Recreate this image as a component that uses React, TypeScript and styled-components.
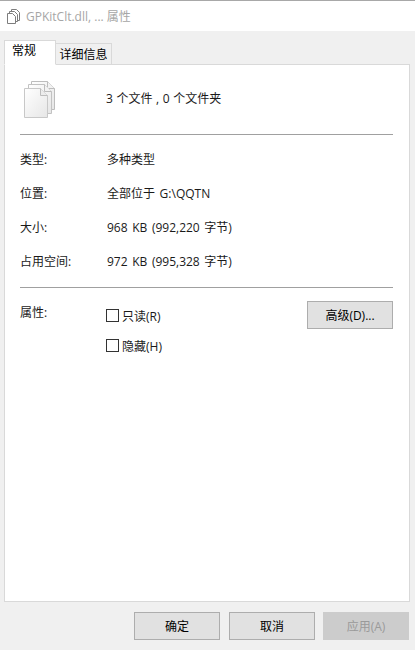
import styled, { createGlobalStyle } from "styled-components";

const GlobalStyle = createGlobalStyle`
  html, body {
    margin: 0;
    padding: 0;
    background: #f0f0f0;
  }
`;

const Dialog = styled.div`
  width: 415px;
  height: 650px;
  display: flex;
  flex-direction: column;
  background: #f0f0f0;
  font-family: "Open Sans", "Noto Sans CJK SC", sans-serif;
  font-size: 12px;
  color: #1a1a1a;
  border-top: 1px solid #a8a8a8;
  box-sizing: border-box;
`;

const TitleBar = styled.div`
  height: 30px;
  flex-shrink: 0;
  display: flex;
  align-items: center;
  gap: 6px;
  padding-left: 7px;
  background: #fff;
  color: #a6a6a6;
`;

const Tabs = styled.div`
  display: flex;
  align-items: flex-end;
  height: 33px;
  padding-left: 4px;
  flex-shrink: 0;
`;

const Tab = styled.div<{ $active?: boolean }>`
  box-sizing: border-box;
  display: flex;
  align-items: ${(p) => (p.$active ? "flex-start" : "center")};
  justify-content: ${(p) => (p.$active ? "flex-start" : "center")};
  padding-left: ${(p) => (p.$active ? "7px" : "0")};
  height: ${(p) => (p.$active ? "25px" : "22px")};
  width: ${(p) => (p.$active ? "52px" : "56px")};
  border: 1px solid #d9d9d9;
  border-left-width: ${(p) => (p.$active ? "1px" : "0")};
  background: ${(p) => (p.$active ? "#fff" : "#f0f0f0")};
  border-bottom-color: ${(p) => (p.$active ? "#fff" : "#d9d9d9")};
  color: #000;
  margin-bottom: -1px;
  position: relative;
  z-index: 1;
`;

const Panel = styled.div`
  box-sizing: border-box;
  height: 538px;
  margin: 0 5px 0 4px;
  padding: 0 16px 0 15px;
  background: #fff;
  border: 1px solid #d9d9d9;
  flex-shrink: 0;
`;

const Summary = styled.div`
  display: flex;
  align-items: center;
  height: 69px;
  padding-left: 4px;
`;

const SummaryText = styled.span`
  margin: 0 0 3px 51px;
  word-spacing: 0.5px;
`;

const Divider = styled.div`
  height: 1px;
  background: #a0a0a0;
`;

const Rows = styled.div`
  display: flex;
  flex-direction: column;
  padding-top: 7px;
  height: 152px;
  box-sizing: border-box;
`;

const Row = styled.div`
  display: grid;
  grid-template-columns: 87px 1fr;
  align-items: center;
  height: 34px;
`;

const Value = styled.span`
  word-spacing: 1.5px;
`;

const Attrs = styled.div`
  display: grid;
  grid-template-columns: 87px 1fr auto;
  padding-top: 13px;
`;

const AttrLabel = styled.div`
  line-height: 20px;
  padding-top: 2px;
`;

const Checks = styled.div`
  display: flex;
  flex-direction: column;
  gap: 11px;
  padding-top: 5px;
`;

const Check = styled.label`
  display: flex;
  align-items: center;
  gap: 3px;
  height: 19px;
  margin-left: -1px;
`;

const Box = styled.span`
  box-sizing: border-box;
  width: 13px;
  height: 13px;
  border: 1px solid #333;
  background: #fff;
`;

const Button = styled.button<{ $disabled?: boolean }>`
  box-sizing: border-box;
  width: 86px;
  height: 28px;
  padding: 0;
  font: inherit;
  color: ${(p) => (p.$disabled ? "#9a9a9a" : "#000")};
  background: ${(p) => (p.$disabled ? "#cccccc" : "#e1e1e1")};
  border: 1px solid ${(p) => (p.$disabled ? "#cccccc" : "#adadad")};
`;

const Footer = styled.div`
  display: flex;
  justify-content: flex-end;
  gap: 8px;
  padding: 10px 6px 0 0;
`;

const OkButton = styled(Button)`
  margin-right: 1px;
`;

const TitleIcon = () => (
  <svg width="13" height="15" viewBox="0 0 13 15" fill="none" stroke="#7d7d7d">
    <path d="M4.5 2.5v-2h5l3 3v8h-2" />
    <path d="M2.5 4.5v-2h5l3 3v7h-2" />
    <path d="M.5 4.5h5l3 3v7h-8z" fill="#fff" />
  </svg>
);

const FilesIcon = () => (
  <svg width="31" height="37" viewBox="0 0 31 37">
    <defs>
      <linearGradient id="sheet" x1="0" y1="0" x2="1" y2="1">
        <stop offset="0" stopColor="#ffffff" />
        <stop offset="1" stopColor="#e6e6e6" />
      </linearGradient>
    </defs>
    <path d="M7.5.5h16l7 7v21h-23z" fill="url(#sheet)" stroke="#bdbdbd" />
    <path d="M23.5.5v7h7" fill="#f2f2f2" stroke="#bdbdbd" />
    <path d="M4.5 3.5h16l7 7v22h-23z" fill="url(#sheet)" stroke="#c2c2c2" />
    <path d="M20.5 3.5v7h7" fill="#f2f2f2" stroke="#bdbdbd" />
    <path d="M.5 7.5h16l7 7v22H.5z" fill="url(#sheet)" stroke="#c8c8c8" />
    <path d="M16.5 7.5v7h7" fill="#ececec" stroke="#bdbdbd" />
  </svg>
);

const rows = [
  ["类型:", "多种类型"],
  ["位置:", "全部位于 G:\\QQTN"],
  ["大小:", "968 KB (992,220 字节)"],
  ["占用空间:", "972 KB (995,328 字节)"],
];

export default function App() {
  return (
    <>
      <GlobalStyle />
      <Dialog>
        <TitleBar>
          <TitleIcon />
          <span>GPKitClt.dll, ... 属性</span>
        </TitleBar>
        <Tabs>
          <Tab $active>常规</Tab>
          <Tab>详细信息</Tab>
        </Tabs>
        <Panel>
          <Summary>
            <FilesIcon />
            <SummaryText>3 个文件 , 0 个文件夹</SummaryText>
          </Summary>
          <Divider />
          <Rows>
            {rows.map(([label, value]) => (
              <Row key={label}>
                <span>{label}</span>
                <Value>{value}</Value>
              </Row>
            ))}
          </Rows>
          <Divider />
          <Attrs>
            <AttrLabel>属性:</AttrLabel>
            <Checks>
              <Check>
                <Box />
                只读(R)
              </Check>
              <Check>
                <Box />
                隐藏(H)
              </Check>
            </Checks>
            <Button>高级(D)...</Button>
          </Attrs>
        </Panel>
        <Footer>
          <OkButton>确定</OkButton>
          <Button>取消</Button>
          <Button $disabled>应用(A)</Button>
        </Footer>
      </Dialog>
    </>
  );
}
